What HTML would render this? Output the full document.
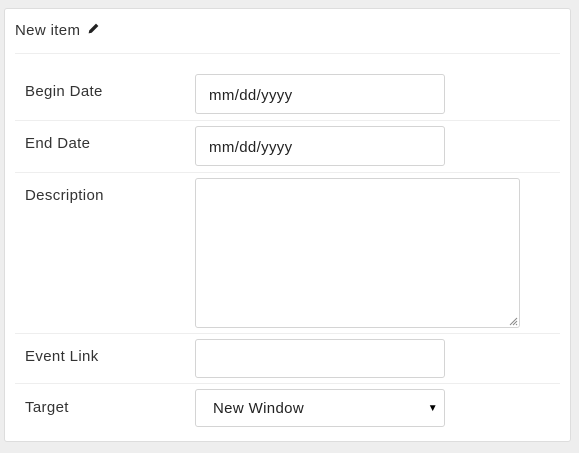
<!DOCTYPE html><html><head><style>
body{margin:0;width:579px;height:453px;background:#eeeeee;font-family:"Liberation Sans",sans-serif;font-size:15px;color:#333;position:relative;overflow:hidden;letter-spacing:0.35px}
.a{position:absolute}
.hr{position:absolute;left:15px;width:545px;height:1px;background:#eee}
.in{position:absolute;left:195px;width:250px;border:1px solid #d4d4d4;border-radius:3px;box-sizing:border-box;padding-left:13px;color:#222;font-size:15px}
</style></head><body>
<div class="a" style="left:4px;top:8px;width:567px;height:434px;background:#fff;border:1px solid #ddd;border-radius:3px;box-sizing:border-box"></div>
<div class="a" style="left:15px;top:22px">New item <svg width="13" height="13" viewBox="0 0 12 12" style="margin-left:2px;vertical-align:0"><path d="M1.5 10.5l0.6-2.8 6.2-6.2 2.2 2.2-6.2 6.2z" fill="#222"/></svg></div>
<div class="hr" style="top:53px"></div>
<div class="a" style="left:25px;top:83px">Begin Date</div>
<div class="in" style="top:74px;height:40px;line-height:42px">mm/dd/yyyy</div>
<div class="hr" style="top:120px"></div>
<div class="a" style="left:25px;top:135px">End Date</div>
<div class="in" style="top:126px;height:40px;line-height:42px">mm/dd/yyyy</div>
<div class="hr" style="top:172px"></div>
<div class="a" style="left:25px;top:187px">Description</div>
<div class="in" style="top:178px;height:150px;width:325px"><svg class="a" style="right:1px;bottom:1px" width="10" height="10" viewBox="0 0 10 10"><path d="M9 2L2 9M9 5L5 9M9 8L8 9" stroke="#888" stroke-width="1"/></svg></div>
<div class="hr" style="top:333px"></div>
<div class="a" style="left:25px;top:348px">Event Link</div>
<div class="in" style="top:339px;height:39px"></div>
<div class="hr" style="top:383px"></div>
<div class="a" style="left:25px;top:399px">Target</div>
<div class="in" style="top:389px;height:38px;line-height:38px;padding-left:17px">New Window<span style="position:absolute;right:6px;top:0;font-size:10px;color:#000">▼</span></div>
</body></html>
